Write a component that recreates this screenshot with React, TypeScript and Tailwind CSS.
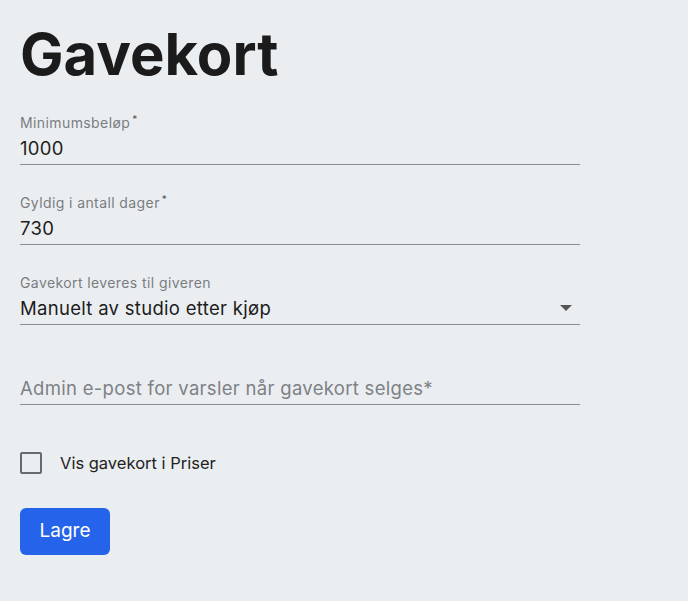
const font = { fontFamily: '"Inter", "Noto Sans", sans-serif' };

interface FieldProps {
  label?: string;
  value?: string;
  placeholder?: string;
  required?: boolean;
  select?: boolean;
}

function Field({ label, value, placeholder, required, select }: FieldProps) {
  return (
    <div className="w-[560px]">
      <div className="h-5 text-[14px] leading-5 tracking-[0.4px] text-[#797d82]">
        {label}
        {label && required && <sup className="ml-[2px] text-[10px] text-[#555]">*</sup>}
      </div>
      <div className="flex h-[32px] items-start border-b border-[#8c8d8f] pt-[2px]">
        <span
          className={`flex-1 text-[18.5px] leading-[26px] tracking-[0.3px] ${value ? "text-[#1c1c1c]" : "text-[#7d8186]"}`}
        >
          {value ?? placeholder}
        </span>
        {select && (
          <svg width="12" height="6" viewBox="0 0 12 6" className="mr-2 mt-[10px]">
            <path d="M0 0h12L6 6z" fill="#555" />
          </svg>
        )}
      </div>
    </div>
  );
}

export default function App() {
  return (
    <div className="min-h-[601px] w-full bg-[#ebeef1] px-5 pt-[26px]" style={font}>
      <h1 className="mb-[30px] h-[57px] text-[58px] font-bold leading-[57px] text-[#1b1b1b]">
        Gavekort
      </h1>

      <div className="flex flex-col gap-[28px]">
        <Field label="Minimumsbeløp" value="1000" required />
        <Field label="Gyldig i antall dager" value="730" required />
        <Field label="Gavekort leveres til giveren" value="Manuelt av studio etter kjøp" select />
        <Field placeholder="Admin e-post for varsler når gavekort selges*" />
      </div>

      <label className="mt-[46px] flex items-center gap-[18px]">
        <span className="h-[22px] w-[22px] rounded-[2px] border-2 border-[#666a6e]" />
        <span className="text-[16.5px] text-[#222]">Vis gavekort i Priser</span>
      </label>

      <button className="mt-[32px] h-[47px] w-[90px] rounded-[6px] bg-[#2563eb] text-[19px] text-white">
        Lagre
      </button>
    </div>
  );
}
